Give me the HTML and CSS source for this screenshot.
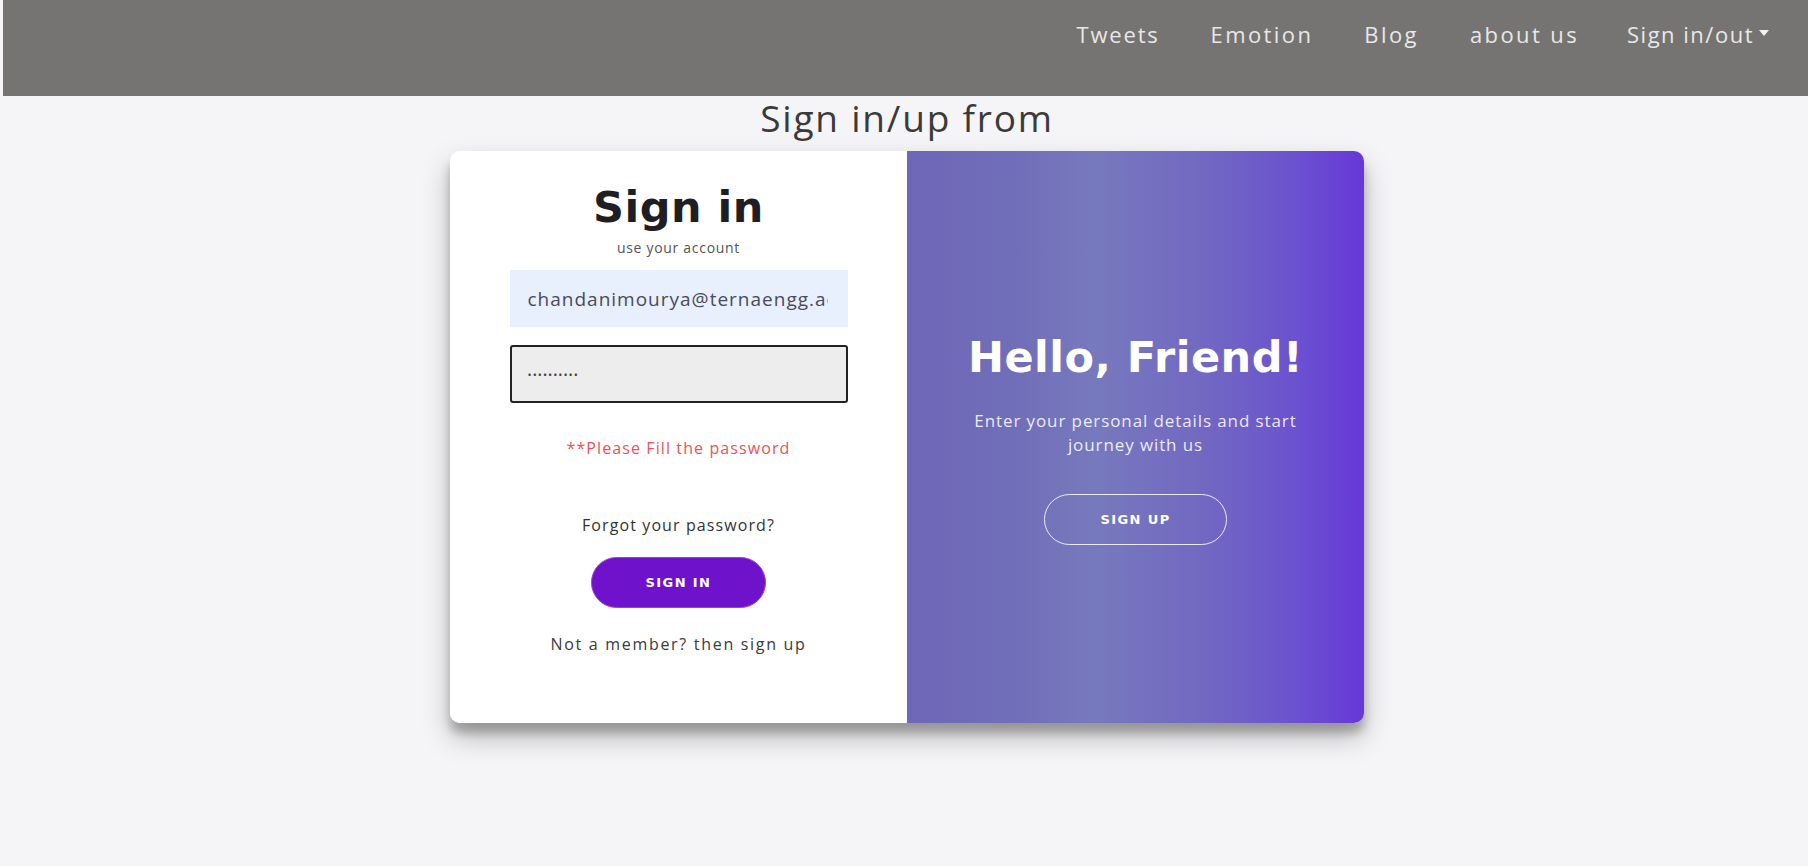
FILE: index.html
```html
<!DOCTYPE html>
<html lang="en">
<head>
<meta charset="utf-8">
<title>Sign in/up</title>
<link rel="stylesheet" href="styles.css">
</head>
<body>
<header class="navbar">
  <nav class="nav-links">
    <a class="nav-link nav-tweets" href="#">Tweets</a>
    <a class="nav-link" href="#">Emotion</a>
    <a class="nav-link" href="#">Blog</a>
    <a class="nav-link" href="#">about us</a>
    <a class="nav-link dropdown" href="#">Sign in/out<span class="caret"></span></a>
  </nav>
</header>
<main class="page">
  <h2 class="page-title">Sign in/up from</h2>
  <div class="auth-card">
    <form class="signin-panel">
      <h1 class="signin-title">Sign in</h1>
      <span class="signin-sub">use your account</span>
      <input class="field field-email" type="email" value="chandanimourya@ternaengg.ac.in">
      <input class="field field-password" type="password" value="1234567890">
      <p class="error-msg">**Please Fill the password</p>
      <a class="forgot" href="#">Forgot your password?</a>
      <button class="btn btn-primary" type="button">Sign in</button>
      <a class="member" href="#">Not a member? then sign up</a>
    </form>
    <div class="overlay-panel">
      <h1 class="overlay-title">Hello, Friend!</h1>
      <p class="overlay-text">Enter your personal details and start journey with us</p>
      <button class="btn btn-ghost" type="button">Sign up</button>
    </div>
  </div>
</main>
</body>
</html>
```

FILE: styles.css
```css
* {
  box-sizing: border-box;
}

body {
  margin: 0;
  padding-left: 3px;
  background: #f5f5f7;
  font-family: "Open Sans", "DejaVu Sans", sans-serif;
  color: #333;
  min-height: 866px;
}

/* ---------- navbar ---------- */
.navbar {
  height: 96px;
  background: #767472;
  display: flex;
  justify-content: flex-end;
  padding: 19px 39px 0 0;
}

.nav-links {
  display: flex;
  height: 30px;
}

.nav-link {
  color: #e8e8e8;
  text-decoration: none;
  font-size: 22px;
  line-height: 30px;
  letter-spacing: 2.4px;
  margin-left: 51px;
}

.nav-tweets {
  letter-spacing: 1.8px;
}

.dropdown {
  margin-left: 48px;
  letter-spacing: 1.5px;
  display: flex;
  align-items: center;
}

.caret {
  display: inline-block;
  width: 0;
  height: 0;
  margin-left: 5px;
  margin-top: -2px;
  border-top: 6px solid #f2f2f2;
  border-left: 5px solid transparent;
  border-right: 5px solid transparent;
}

/* ---------- page ---------- */
.page {
  padding-left: 3px;
  display: flex;
  flex-direction: column;
  align-items: center;
}

.page-title {
  margin: 0;
  font-size: 37px;
  line-height: 44px;
  font-weight: 400;
  letter-spacing: 1.8px;
  color: #3a3a3a;
}

.auth-card {
  margin-top: 11px;
  width: 914px;
  height: 572px;
  border-radius: 10px;
  overflow: hidden;
  display: grid;
  grid-template-columns: 457px 457px;
  background: #fff;
  box-shadow: 0 14px 28px rgba(0, 0, 0, 0.25), 0 10px 10px rgba(0, 0, 0, 0.22);
}

/* ---------- sign in panel ---------- */
.signin-panel {
  margin: 0;
  background: #fff;
  display: flex;
  flex-direction: column;
  align-items: center;
  padding-top: 35px;
}

.signin-title {
  margin: 0;
  font-family: "DejaVu Sans", sans-serif;
  font-weight: 700;
  font-size: 43px;
  line-height: 43px;
  letter-spacing: 0.5px;
  color: #1e1e24;
}

.signin-sub {
  margin-top: 11px;
  font-size: 14px;
  line-height: 16px;
  letter-spacing: 0.7px;
  color: #555;
}

.field {
  width: 338px;
  font-family: "Open Sans", sans-serif;
  outline: none;
}

.field-email {
  margin-top: 14px;
  height: 57px;
  border: none;
  background: #e8f0fe;
  padding: 0 20px 0 18px;
  font-size: 19px;
  letter-spacing: 1px;
  color: #4a4a58;
}

.field-password {
  margin-top: 18px;
  height: 58px;
  border: 2px solid #222;
  border-radius: 3px;
  background: #ededed;
  padding: 0 16px;
  font-size: 11px;
  letter-spacing: 1px;
  color: #444;
}

.error-msg {
  margin: 35px 0 0;
  font-size: 16px;
  line-height: 20px;
  letter-spacing: 1.1px;
  color: #e6545a;
}

.forgot {
  margin-top: 57px;
  font-size: 16px;
  line-height: 20px;
  letter-spacing: 1.1px;
  color: #333;
  text-decoration: none;
}

.btn {
  height: 51px;
  padding: 0 54px;
  border-radius: 26px;
  font-family: "DejaVu Sans", sans-serif;
  font-weight: 700;
  font-size: 13px;
  letter-spacing: 1.4px;
  text-transform: uppercase;
  color: #fff;
  cursor: pointer;
}

.btn-primary {
  margin-top: 22px;
  background: #6f12cb;
  border: 1px solid #a43ad8;
}

.member {
  margin-top: 26px;
  font-size: 16px;
  line-height: 20px;
  letter-spacing: 1.7px;
  color: #3a3a3a;
  text-decoration: none;
}

/* ---------- overlay panel ---------- */
.overlay-panel {
  background: linear-gradient(to right, #6e66b8 0%, #716fb9 25%, #7779bd 41%, #7268c2 65%, #6b52cf 85%, #6637d9 100%);
  display: flex;
  flex-direction: column;
  align-items: center;
  padding: 185px 40px 0;
  text-align: center;
  color: #fff;
}

.overlay-title {
  margin: 0;
  font-family: "DejaVu Sans", sans-serif;
  font-weight: 700;
  font-size: 43px;
  line-height: 43px;
  letter-spacing: 0.5px;
  color: #fff;
}

.overlay-text {
  margin: 30px 0 0;
  max-width: 360px;
  font-size: 17px;
  line-height: 24px;
  letter-spacing: 0.9px;
  color: rgba(255, 255, 255, 0.88);
}

.btn-ghost {
  margin-top: 37px;
  background: transparent;
  border: 1px solid rgba(255, 255, 255, 0.85);
  padding: 0 55px;
}
```
